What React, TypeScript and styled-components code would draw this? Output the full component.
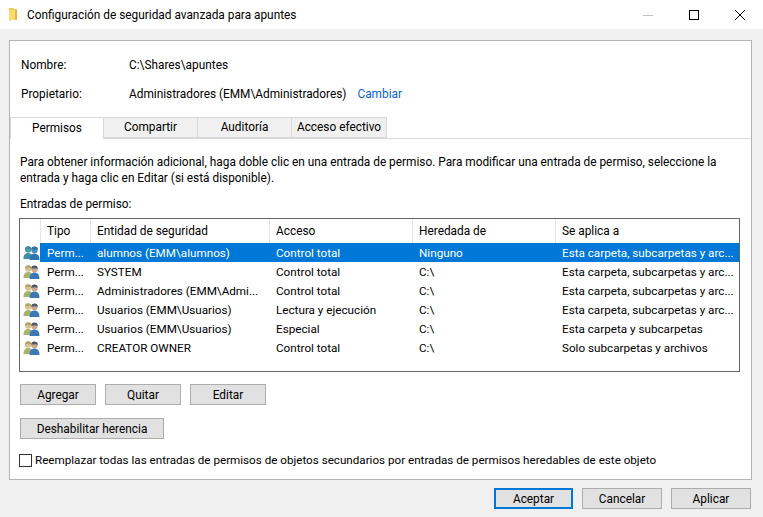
import React from "react";
import styled, { createGlobalStyle } from "styled-components";

const GlobalStyle = createGlobalStyle`
  html, body {
    margin: 0;
    padding: 0;
    background: #f0f0f0;
  }
  * {
    box-sizing: border-box;
  }
`;

type Row = {
  tipo: string;
  entidad: string;
  acceso: string;
  heredada: string;
  aplica: string;
  selected?: boolean;
};

const rows: Row[] = [
  { tipo: "Perm...", entidad: "alumnos (EMM\\alumnos)", acceso: "Control total", heredada: "Ninguno", aplica: "Esta carpeta, subcarpetas y arc...", selected: true },
  { tipo: "Perm...", entidad: "SYSTEM", acceso: "Control total", heredada: "C:\\", aplica: "Esta carpeta, subcarpetas y arc..." },
  { tipo: "Perm...", entidad: "Administradores (EMM\\Admi...", acceso: "Control total", heredada: "C:\\", aplica: "Esta carpeta, subcarpetas y arc..." },
  { tipo: "Perm...", entidad: "Usuarios (EMM\\Usuarios)", acceso: "Lectura y ejecución", heredada: "C:\\", aplica: "Esta carpeta, subcarpetas y arc..." },
  { tipo: "Perm...", entidad: "Usuarios (EMM\\Usuarios)", acceso: "Especial", heredada: "C:\\", aplica: "Esta carpeta y subcarpetas" },
  { tipo: "Perm...", entidad: "CREATOR OWNER", acceso: "Control total", heredada: "C:\\", aplica: "Solo subcarpetas y archivos" },
];

const columns = ["Tipo", "Entidad de seguridad", "Acceso", "Heredada de", "Se aplica a"];
const tabs = ["Permisos", "Compartir", "Auditoría", "Acceso efectivo"];

const FolderIcon = () => (
  <svg width="10" height="16" viewBox="0 0 10 16">
    <path d="M0 1h4l1 1h3v11H2l-2 1z" fill="#f2c94f" />
    <path d="M0 3h7v10H2l-2 1z" fill="#ffdc73" />
    <path d="M6 3h2v10H6z" fill="#e9b93d" />
  </svg>
);

const UsersIcon = ({ selected }: { selected?: boolean }) => {
  const backHead = selected ? "#4f9aad" : "#d8c28f";
  const backHair = selected ? "#3f8aa0" : "#b7a164";
  const backBody = selected ? "#3f8ea5" : "#a8b26f";
  const frontHead = selected ? "#4a8fb8" : "#c9a68c";
  const frontHair = selected ? "#2f6f96" : "#4c5a68";
  const frontBody = selected ? "#2f76b2" : "#3c78b4";
  return (
    <svg width="17" height="16" viewBox="0 0 17 16">
      <circle cx="5.2" cy="4.6" r="3.2" fill={backHead} />
      <path d="M2 4.4a3.2 3.2 0 0 1 6.4 0c-1.5-.9-4.900-.9-6.400 0z" fill={backHair} />
      <path d="M0.5 13c0-3 1.800-5 4.700-5s4.700 2 4.700 5v1H0.500z" fill={backBody} />
      <circle cx="11.500" cy="5" r="3.200" fill={frontHead} />
      <path d="M8.300 4.800a3.200 3.200 0 0 1 6.400 0c-1.500-.9-4.900-.9-6.400 0z" fill={frontHair} />
      <path d="M6.600 14c0-3.400 2-5.500 4.900-5.500s4.900 2.100 4.900 5.500v1H6.600z" fill={frontBody} />
    </svg>
  );
};

const App = () => {
  return (
    <>
      <GlobalStyle />
      <Window>
        <TitleBar>
          <TitleLeft>
            <FolderIcon />
            <span>Configuración de seguridad avanzada para apuntes</span>
          </TitleLeft>
          <WindowControls>
            <ControlSlot>
              <svg width="10" height="10" viewBox="0 0 10 10">
                <path d="M0 5.500h10" stroke="#c4c4c4" strokeWidth="1" />
              </svg>
            </ControlSlot>
            <ControlSlot>
              <svg width="10" height="10" viewBox="0 0 10 10">
                <rect x="0.500" y="0.500" width="9" height="9" fill="none" stroke="#000" strokeWidth="1" />
              </svg>
            </ControlSlot>
            <ControlSlot>
              <svg width="10" height="10" viewBox="0 0 10 10">
                <path d="M0 0l10 10M10 0L0 10" stroke="#000" strokeWidth="1" />
              </svg>
            </ControlSlot>
          </WindowControls>
        </TitleBar>

        <Body>
          <Panel>
            <InfoRow>
              <InfoLabel>Nombre:</InfoLabel>
              <span>C:\Shares\apuntes</span>
            </InfoRow>
            <InfoRow>
              <InfoLabel>Propietario:</InfoLabel>
              <span>Administradores (EMM\Administradores)</span>
              <ChangeLink href="#">Cambiar</ChangeLink>
            </InfoRow>

            <TabStrip>
              {tabs.map((tab, i) => (
                <Tab key={tab} $active={i === 0} $wide={i === 3}>
                  {tab}
                </Tab>
              ))}
            </TabStrip>

            <TabContent>
              <Description>
                Para obtener información adicional, haga doble clic en una entrada de permiso. Para modificar una
                entrada de permiso, seleccione la entrada y haga clic en Editar (si está disponible).
              </Description>
              <SectionLabel>Entradas de permiso:</SectionLabel>

              <ListBox>
                <HeaderRow>
                  <HeaderCell />
                  {columns.map((col) => (
                    <HeaderCell key={col}>{col}</HeaderCell>
                  ))}
                </HeaderRow>
                {rows.map((row, i) => (
                  <DataRow key={i}>
                    <IconCell>
                      <UsersIcon selected={row.selected} />
                    </IconCell>
                    <RowCells $selected={row.selected}>
                      <TipoCell>{row.tipo}</TipoCell>
                      <Cell>{row.entidad}</Cell>
                      <Cell>{row.acceso}</Cell>
                      <Cell>{row.heredada}</Cell>
                      <Cell>{row.aplica}</Cell>
                    </RowCells>
                  </DataRow>
                ))}
              </ListBox>

              <ButtonRow>
                <PanelButton $width={76}>Agregar</PanelButton>
                <PanelButton $width={76}>Quitar</PanelButton>
                <PanelButton $width={76}>Editar</PanelButton>
              </ButtonRow>
              <InheritRow>
                <PanelButton $width={144}>Deshabilitar herencia</PanelButton>
              </InheritRow>
              <CheckRow>
                <CheckBox />
                <span>
                  Reemplazar todas las entradas de permisos de objetos secundarios por entradas de permisos heredables
                  de este objeto
                </span>
              </CheckRow>
            </TabContent>
          </Panel>

          <Footer>
            <PanelButton $width={79} $primary>
              Aceptar
            </PanelButton>
            <PanelButton $width={80}>Cancelar</PanelButton>
            <PanelButton $width={80}>Aplicar</PanelButton>
          </Footer>
        </Body>
      </Window>
    </>
  );
};

export default App;

const Window = styled.div`
  width: 763px;
  height: 517px;
  overflow: hidden;
  display: flex;
  flex-direction: column;
  background: #f0f0f0;
  color: #000;
  font-family: Roboto, "Open Sans", sans-serif;
  font-size: 11.85px;
  line-height: 16px;
`;

const TitleBar = styled.div`
  height: 29px;
  flex: none;
  display: flex;
  align-items: center;
  justify-content: space-between;
  background: #fff;
  padding-left: 9px;
`;

const TitleLeft = styled.div`
  display: flex;
  align-items: center;
  gap: 8px;
`;

const WindowControls = styled.div`
  display: flex;
`;

const ControlSlot = styled.div`
  width: 46px;
  height: 29px;
  display: flex;
  align-items: center;
  justify-content: center;
`;

const Body = styled.div`
  flex: 1;
  padding: 11px 11px 8px 9px;
  display: flex;
  flex-direction: column;
`;

const Panel = styled.div`
  height: 440px;
  flex: none;
  background: #fff;
  border: 1px solid #b4b4b4;
  padding-top: 9px;
  display: flex;
  flex-direction: column;
`;

const InfoRow = styled.div`
  height: 29px;
  flex: none;
  display: flex;
  align-items: center;
  padding-left: 11px;
`;

const InfoLabel = styled.span`
  width: 108px;
  flex: none;
`;

const ChangeLink = styled.a`
  margin-left: 11px;
  color: #0a66d0;
  text-decoration: none;
`;

const TabStrip = styled.div`
  margin-top: 9px;
  height: 22px;
  flex: none;
  display: flex;
  align-items: flex-end;
  border-bottom: 1px solid #d9d9d9;
`;

const Tab = styled.div<{ $active?: boolean; $wide?: boolean }>`
  width: ${(p) => (p.$wide ? 95 : 94)}px;
  height: ${(p) => (p.$active ? 22 : 21)}px;
  flex: none;
  display: flex;
  align-items: center;
  justify-content: center;
  background: ${(p) => (p.$active ? "#fff" : "#f0f0f0")};
  border: 1px solid #d9d9d9;
  border-left-width: ${(p) => (p.$active ? 1 : 0)}px;
  border-bottom-width: ${(p) => (p.$active ? 0 : 1)}px;
  margin-bottom: ${(p) => (p.$active ? -1 : 0)}px;
  padding-bottom: 1px;
`;

const TabContent = styled.div`
  flex: 1;
  padding: 15px 11px 0 10px;
  display: flex;
  flex-direction: column;
`;

const Description = styled.p`
  margin: 0;
  width: 712px;
  line-height: 16px;
`;

const SectionLabel = styled.div`
  margin-top: 10px;
`;

const ListBox = styled.div`
  margin: 6px 0 0 -1px;
  height: 154px;
  flex: none;
  background: #fff;
  border: 1px solid #666;
  overflow: hidden;
`;

const HeaderRow = styled.div`
  height: 24px;
  display: grid;
  grid-template-columns: 21px 50px 179px 143px 143px 1fr;
`;

const HeaderCell = styled.div`
  display: flex;
  align-items: center;
  padding-left: 6px;
  border-right: 1px solid #e5e5e5;
  white-space: nowrap;
  &:last-child {
    border-right: none;
  }
`;

const DataRow = styled.div`
  height: 19px;
  display: flex;
`;

const IconCell = styled.div`
  width: 20px;
  flex: none;
  display: flex;
  align-items: center;
  justify-content: flex-end;
`;

const RowCells = styled.div<{ $selected?: boolean }>`
  flex: 1;
  display: grid;
  grid-template-columns: 51px 179px 143px 143px 1fr;
  background: ${(p) => (p.$selected ? "#0078d7" : "transparent")};
  color: ${(p) => (p.$selected ? "#fff" : "#000")};
  font-size: 11.7px;
`;

const Cell = styled.div`
  display: flex;
  align-items: center;
  padding-left: 6px;
  white-space: nowrap;
  overflow: hidden;
`;

const TipoCell = styled(Cell)`
  padding-left: 7px;
`;

const ButtonRow = styled.div`
  margin-top: 12px;
  display: flex;
  gap: 9px;
`;

const InheritRow = styled.div`
  margin-top: 13px;
`;

const PanelButton = styled.button<{ $width: number; $primary?: boolean }>`
  width: ${(p) => p.$width}px;
  height: 21px;
  flex: none;
  padding: 0;
  background: #e1e1e1;
  border: ${(p) => (p.$primary ? "2px solid #0078d7" : "1px solid #adadad")};
  color: #000;
  font: inherit;
`;

const CheckRow = styled.div`
  margin: 13px 0 0 -1px;
  display: flex;
  align-items: center;
  white-space: nowrap;
  font-size: 11.65px;
`;

const CheckBox = styled.span`
  width: 13px;
  height: 13px;
  flex: none;
  margin-right: 3px;
  background: #fff;
  border: 1px solid #333;
`;

const Footer = styled.div`
  margin-top: 8px;
  display: flex;
  justify-content: flex-end;
  gap: 9px;
  padding-right: 1px;
`;
